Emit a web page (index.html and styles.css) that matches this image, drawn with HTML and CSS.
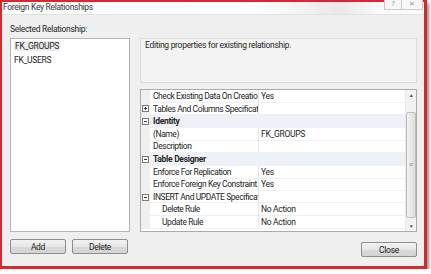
FILE: index.html
```html
<!DOCTYPE html>
<html lang="en">
<head>
  <meta charset="UTF-8">
  <title>Foreign Key Relationships</title>
  <link rel="stylesheet" href="styles.css">
</head>
<body>
  <div class="window">
    <div class="titlebar">
      <span class="title">Foreign Key Relationships</span>
      <div class="caption-btns">
        <span class="cap-btn">?</span>
        <span class="cap-btn">✕</span>
      </div>
    </div>

    <div class="dialog">
      <div class="label">Selected Relationship:</div>
      <div class="spacer"></div>

      <div class="listbox">
        <div class="item"><span class="selected">FK_GROUPS</span></div>
        <div class="item">FK_USERS</div>
      </div>

      <div class="right">
        <div class="desc">Editing properties for existing relationship.</div>
        <div class="grid">
          <div class="rows">
            <div class="row">
              <span class="gutter"></span>
              <span class="name">Check Existing Data On Creatio</span>
              <span class="value">Yes</span>
            </div>
            <div class="row">
              <span class="gutter"><svg width="7" height="7" viewBox="0 0 7 7"><rect x="0.5" y="0.5" width="6" height="6" fill="#fff" stroke="#7a7a7a"/><path d="M2 3.5h3M3.5 2v3" stroke="#333"/></svg></span>
              <span class="name">Tables And Columns Specificat</span>
              <span class="value"></span>
            </div>
            <div class="row category">
              <span class="gutter"><svg width="7" height="7" viewBox="0 0 7 7"><rect x="0.5" y="0.5" width="6" height="6" fill="#fff" stroke="#7a7a7a"/><path d="M2 3.5h3" stroke="#333"/></svg></span>
              <span class="name">Identity</span>
            </div>
            <div class="row">
              <span class="gutter"></span>
              <span class="name">(Name)</span>
              <span class="value">FK_GROUPS</span>
            </div>
            <div class="row">
              <span class="gutter"></span>
              <span class="name">Description</span>
              <span class="value"></span>
            </div>
            <div class="row category">
              <span class="gutter"><svg width="7" height="7" viewBox="0 0 7 7"><rect x="0.5" y="0.5" width="6" height="6" fill="#fff" stroke="#7a7a7a"/><path d="M2 3.5h3" stroke="#333"/></svg></span>
              <span class="name">Table Designer</span>
            </div>
            <div class="row">
              <span class="gutter"></span>
              <span class="name">Enforce For Replication</span>
              <span class="value">Yes</span>
            </div>
            <div class="row">
              <span class="gutter"></span>
              <span class="name">Enforce Foreign Key Constraint</span>
              <span class="value">Yes</span>
            </div>
            <div class="row">
              <span class="gutter"><svg width="7" height="7" viewBox="0 0 7 7"><rect x="0.5" y="0.5" width="6" height="6" fill="#fff" stroke="#7a7a7a"/><path d="M2 3.5h3" stroke="#333"/></svg></span>
              <span class="name">INSERT And UPDATE Specificat</span>
              <span class="value"></span>
            </div>
            <div class="row sub">
              <span class="gutter"></span>
              <span class="name">Delete Rule</span>
              <span class="value">No Action</span>
            </div>
            <div class="row sub">
              <span class="gutter"></span>
              <span class="name">Update Rule</span>
              <span class="value">No Action</span>
            </div>
          </div>
          <div class="scrollbar">
            <div class="arrow">▲</div>
            <div class="track">
              <div class="thumb">≡</div>
            </div>
            <div class="arrow">▼</div>
          </div>
        </div>
      </div>

      <div class="left-btns">
        <button>Add</button>
        <button>Delete</button>
      </div>
      <div class="right-btns">
        <button>Close</button>
      </div>
    </div>
  </div>
</body>
</html>
```

FILE: styles.css
```css
body {
  margin: 0;
  background: #fff;
  font-family: Roboto, "Liberation Sans", sans-serif;
  font-size: 8.5px;
  letter-spacing: -0.3px;
  color: #262626;
}

.window {
  width: 427px;
  height: 269px;
  box-sizing: border-box;
  border: 2px solid #d42a2f;
  border-right-width: 3px;
  border-bottom-width: 3px;
  background: #efefef;
  box-shadow: 2px 3px 3px rgba(0, 0, 0, 0.45);
  display: flex;
  flex-direction: column;
}

.titlebar {
  height: 12px;
  display: flex;
  align-items: flex-start;
  padding: 0 1px;
  background: linear-gradient(to right, #fafafa 0%, #fff 60%, #e8e8e8 80%, #fafafa 90%);
  border-bottom: 1px solid #e2e2e2;
}

.title {
  line-height: 11px;
  color: #3a3a3a;
}

.caption-btns {
  margin-left: auto;
  margin-top: -2px;
  display: flex;
}

.cap-btn {
  width: 18px;
  height: 10px;
  box-sizing: border-box;
  border: 1px solid #c9c9c9;
  border-top: none;
  background: #f7f7f7;
  color: #999;
  font-size: 7px;
  line-height: 9px;
  text-align: center;
}

.cap-btn + .cap-btn {
  width: 21px;
  border-left: none;
}

.dialog {
  flex: 1;
  display: grid;
  grid-template-columns: 120px 277px;
  grid-template-rows: auto 194px auto;
  align-content: start;
  column-gap: 10px;
  padding: 9px 8px 0 8px;
}

.label {
  line-height: 11px;
  margin-bottom: 3px;
}

.listbox {
  background: #fff;
  border: 1px solid #b4b4b4;
  padding: 0 3px;
}

.item {
  line-height: 14px;
}

.selected {
  background: #ececec;
  padding: 0 1px;
}

.right {
  display: flex;
  flex-direction: column;
  gap: 6px;
}

.desc {
  height: 45px;
  box-sizing: border-box;
  border: 1px solid #dcdcdc;
  background: #f3f3f3;
  padding: 1px 4px;
  line-height: 11px;
}

.grid {
  flex: 1;
  display: flex;
  border: 1px solid #ababab;
  background: #fff;
}

.rows {
  flex: 1;
  display: flex;
  flex-direction: column;
}

.row {
  height: 12.6px;
  display: grid;
  grid-template-columns: 9px 109px 1fr;
  line-height: 12px;
}

.gutter {
  background: #efefef;
  display: flex;
  align-items: center;
  padding-left: 1px;
}

.name {
  padding-left: 3px;
  letter-spacing: -0.42px;
  white-space: nowrap;
  overflow: hidden;
  border-bottom: 1px solid #f0f0f0;
  border-right: 1px solid #e6e6e6;
}

.value {
  padding-left: 2px;
  white-space: nowrap;
  border-bottom: 1px solid #f0f0f0;
}

.category {
  background: #eef1f5;
}

.category .name {
  grid-column: 2 / 4;
  font-weight: bold;
  letter-spacing: -0.3px;
  border-right: none;
  border-bottom: none;
}

.sub .name {
  padding-left: 12px;
}

.scrollbar {
  width: 10px;
  display: flex;
  flex-direction: column;
  background: #f2f2f2;
  border-left: 1px solid #e8e8e8;
}

.arrow {
  height: 10px;
  font-size: 5px;
  line-height: 10px;
  text-align: center;
  color: #555;
}

.track {
  flex: 1;
  padding-top: 12px;
}

.thumb {
  height: 106px;
  box-sizing: border-box;
  border: 1px solid #bdbdbd;
  border-radius: 2px;
  background: linear-gradient(to right, #f2f2f2, #dedede);
  color: #888;
  font-size: 7px;
  display: flex;
  align-items: center;
  justify-content: center;
}

.left-btns {
  display: flex;
  gap: 6px;
  margin-top: 7px;
}

.right-btns {
  display: flex;
  justify-content: flex-end;
  margin-top: 10px;
}

button {
  width: 56px;
  height: 15px;
  padding: 0;
  border: 1px solid #8e8e8e;
  border-radius: 2px;
  background: linear-gradient(#f3f3f3, #e6e6e6 50%, #d9d9d9 51%, #d4d4d4);
  font-family: inherit;
  font-size: 8.5px;
  letter-spacing: -0.3px;
  color: #222;
}
```
